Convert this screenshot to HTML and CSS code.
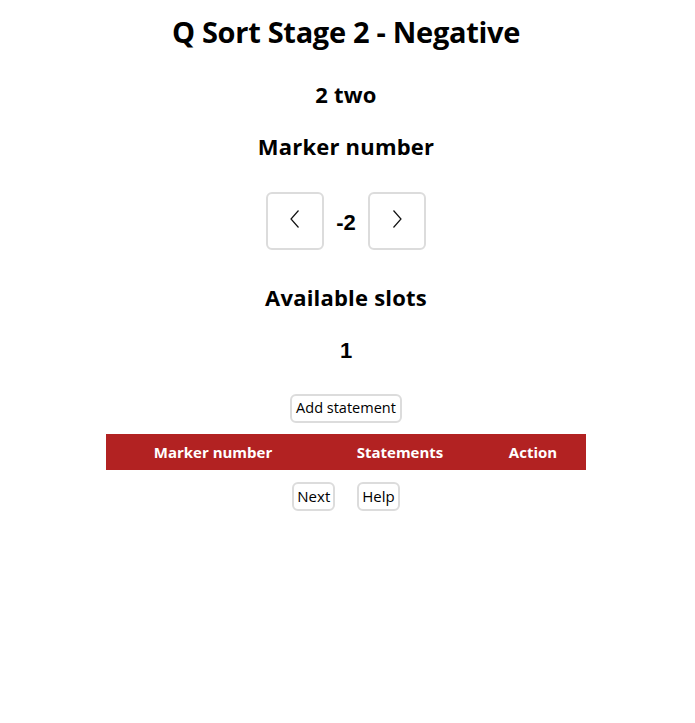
FILE: index.html
```html
<!DOCTYPE html>
<html lang="en">
<head>
<meta charset="utf-8">
<title>Q Sort Stage 2 - Negative</title>
<link rel="stylesheet" href="styles.css">
</head>
<body>
<main class="page">
  <h1 class="title">Q Sort Stage 2 - Negative</h1>
  <h2 class="heading heading-first">2 two</h2>
  <h2 class="heading">Marker number</h2>
  <div class="stepper">
    <button class="step-btn" aria-label="Previous">
      <svg width="10" height="18" viewBox="0 0 10 18"><polyline points="8.5,0.5 1,9 8.5,17.5" fill="none" stroke="#111" stroke-width="1.2"/></svg>
    </button>
    <span class="marker-value">-2</span>
    <button class="step-btn" aria-label="Next">
      <svg width="10" height="18" viewBox="0 0 10 18"><polyline points="1.5,0.5 9,9 1.5,17.5" fill="none" stroke="#111" stroke-width="1.2"/></svg>
    </button>
  </div>
  <h2 class="heading heading-slots">Available slots</h2>
  <div class="slots-value">1</div>
  <button class="btn add-btn">Add statement</button>
  <table class="statements">
    <thead>
      <tr>
        <th class="col-marker">Marker number</th>
        <th class="col-statements">Statements</th>
        <th class="col-action">Action</th>
      </tr>
    </thead>
  </table>
  <div class="nav-row">
    <button class="btn nav-btn">Next</button>
    <button class="btn nav-btn">Help</button>
  </div>
</main>
</body>
</html>
```
FILE: styles.css
```css
* { box-sizing: border-box; }
html, body { margin: 0; padding: 0; background: #fff; }
body { font-family: "Open Sans", "DejaVu Sans", sans-serif; color: #000; }

.page {
  display: flex;
  flex-direction: column;
  align-items: center;
  padding-top: 12px;
  padding-right: 3px;
}

.title {
  margin: 0;
  font-family: "Open Sans", sans-serif;
  font-weight: 700;
  font-size: 29px;
  line-height: 40px;
  letter-spacing: -0.3px;
}

.heading {
  margin: 22px 0 0;
  font-family: "Open Sans", sans-serif;
  font-weight: 700;
  font-size: 22px;
  line-height: 30px;
  letter-spacing: 0.2px;
}
.heading-first { margin-top: 27px; }
.heading-slots { margin-top: 32px; }

.stepper {
  margin-top: 31px;
  display: flex;
  align-items: center;
  gap: 12px;
}
.step-btn {
  width: 58px;
  height: 58px;
  border: 2px solid #dcdcdc;
  border-radius: 6px;
  background: #fff;
  display: flex;
  align-items: center;
  justify-content: center;
  padding: 0 0 4px;
}
.marker-value {
  font-family: "Liberation Sans", Arial, sans-serif;
  font-weight: 700;
  font-size: 22px;
  line-height: 30px;
  padding-top: 4px;
}

.slots-value {
  margin-top: 24px;
  font-family: "Liberation Sans", Arial, sans-serif;
  font-weight: 700;
  font-size: 22px;
  line-height: 30px;
}

.btn {
  font-family: "Open Sans", sans-serif;
  font-size: 14.5px;
  line-height: 18px;
  color: #000;
  background: #fff;
  border: 2px solid #dcdcdc;
  border-radius: 6px;
  padding: 3px 4px 4px;
  height: 29px;
}
.nav-btn { font-size: 15px; padding-left: 3px; padding-right: 3px; }
.add-btn { margin-top: 28px; }

.statements {
  margin-top: 11px;
  width: 480px;
  border-collapse: collapse;
}
.statements th {
  background: #b22222;
  color: #fff;
  font-family: "Open Sans", sans-serif;
  font-weight: 700;
  font-size: 15px;
  height: 36px;
  padding: 0;
  text-align: center;
}
.col-marker { width: 214px; }
.col-statements { width: 160px; }
.col-action { width: 106px; }

.nav-row {
  margin-top: 12px;
  display: flex;
  gap: 22px;
}
```
